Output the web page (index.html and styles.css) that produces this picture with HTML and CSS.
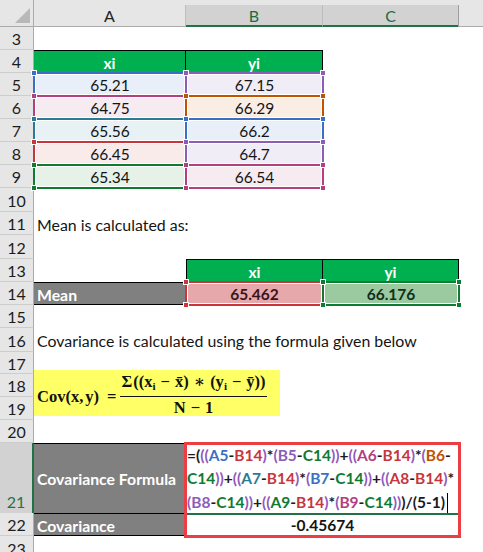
FILE: index.html
```html
<!DOCTYPE html>
<html>
<head>
<meta charset="utf-8">
<link rel="stylesheet" href="styles.css">
</head>
<body>
<div class="sheet">
  <div class="colhdr">
    <div class="corner"><span class="tri"></span></div>
    <div class="ch">A</div>
    <div class="ch sel">B</div>
    <div class="ch sel">C</div>
    <div class="ch rest"></div>
  </div>

  <div class="row h23"><div class="rh">3</div></div>
  <div class="row h23"><div class="rh">4</div><div class="c hd">xi</div><div class="c hd">yi</div></div>
  <div class="row h23"><div class="rh">5</div><div class="c ref blue">65.21</div><div class="c ref purple">67.15</div></div>
  <div class="row h23"><div class="rh">6</div><div class="c ref magenta">64.75</div><div class="c ref orange">66.29</div></div>
  <div class="row h23"><div class="rh">7</div><div class="c ref teal">65.56</div><div class="c ref blue">66.2</div></div>
  <div class="row h23"><div class="rh">8</div><div class="c ref red">66.45</div><div class="c ref purple">64.7</div></div>
  <div class="row h23"><div class="rh">9</div><div class="c ref green">65.34</div><div class="c ref magenta">66.54</div></div>
  <div class="row h24"><div class="rh">10</div></div>
  <div class="row h23"><div class="rh">11</div><div class="c txt">Mean is calculated as:</div></div>
  <div class="row h24"><div class="rh">12</div></div>
  <div class="row h23"><div class="rh">13</div><div class="c"></div><div class="c hd hdl">xi</div><div class="c hd">yi</div></div>
  <div class="row h23"><div class="rh">14</div><div class="c gray grayb">Mean</div><div class="c ref red meanx b">65.462</div><div class="c ref green meany b">66.176</div></div>
  <div class="row h23"><div class="rh">15</div></div>
  <div class="row h24"><div class="rh">16</div><div class="c txt">Covariance is calculated using the formula given below</div></div>
  <div class="row h22"><div class="rh">17</div></div>
  <div class="row h23"><div class="rh">18</div>
    <div class="c eqhost">
      <div class="eq">
        <span class="lhs">Cov(x,<span class="th"></span>y)</span><span class="eqs">=</span>
        <span class="frac">
          <span class="num"><span class="sig">Σ</span>((x<sub>i</sub><span class="op">−</span>x̄)<span class="op">∗</span>(y<sub>i</sub><span class="op">−</span>ȳ))</span>
          <span class="den">N<span class="op">−</span>1</span>
        </span>
      </div>
    </div>
  </div>
  <div class="row h23"><div class="rh">19</div></div>
  <div class="row h23"><div class="rh">20</div></div>
  <div class="row h70"><div class="rh rsel">21</div>
    <div class="c gray grayb">Covariance Formula</div>
    <div class="c span2 fcell">
      <div class="ftext">
        <span class="k">=(</span><span class="p">((</span><span class="cb">A5</span>-<span class="cr">B14</span><span class="p">)</span>*<span class="p">(</span><span class="cp">B5</span>-<span class="cg">C14</span><span class="p">))</span>+<span class="p">((</span><span class="cm">A6</span>-<span class="cr">B14</span><span class="p">)</span>*<span class="p">(</span><span class="co">B6</span>-<br>
        <span class="cg">C14</span><span class="p">))</span>+<span class="p">((</span><span class="ct">A7</span>-<span class="cr">B14</span><span class="p">)</span>*<span class="p">(</span><span class="cb">B7</span>-<span class="cg">C14</span><span class="p">))</span>+<span class="p">((</span><span class="cr">A8</span>-<span class="cr">B14</span><span class="p">)</span>*<br>
        <span class="p">(</span><span class="cp">B8</span>-<span class="cg">C14</span><span class="p">))</span>+<span class="p">((</span><span class="cg">A9</span>-<span class="cr">B14</span><span class="p">)</span>*<span class="p">(</span><span class="cm">B9</span>-<span class="cg">C14</span><span class="p">))</span>)/(5-1)<span class="caret"></span>
      </div>
      <div class="active"></div>
      <div class="redbox"></div>
    </div>
  </div>
  <div class="row h23"><div class="rh">22</div><div class="c gray grayb">Covariance</div><div class="c span2 b">-0.45674</div></div>
  <div class="row h24"><div class="rh">23</div></div>
</div>
</body>
</html>
```

FILE: styles.css
```css
* { box-sizing: border-box; margin: 0; padding: 0; }

body {
  margin: 0;
  width: 483px;
  height: 552px;
  overflow: hidden;
  background: #fff;
  font-family: Lato, "Liberation Sans", sans-serif;
  font-size: 15.5px;
  color: #141414;
}

.sheet { position: relative; }

/* column header */
.colhdr {
  display: grid;
  grid-template-columns: 34px 152px 137px 136px 24px;
  height: 27px;
  background: #e6e6e6;
}
.corner {
  position: relative;
  border-right: 1px solid #ababab;
  border-bottom: 1px solid #ababab;
}
.tri {
  position: absolute;
  right: 3px;
  bottom: 3px;
  width: 0;
  height: 0;
  border-left: 15px solid transparent;
  border-bottom: 15px solid #b8b8b8;
}
.ch {
  margin-top: 5px;
  display: flex;
  align-items: center;
  justify-content: center;
  font-size: 16px;
  color: #222;
  border-right: 1px solid #bdbdbd;
  border-bottom: 1px solid #ababab;
}
.ch.sel {
  background: #d2d2d2;
  color: #1d6b40;
  border-bottom: 2px solid #217346;
  padding-top: 1px;
}
.ch.rest { border-right: 0; border-left: 1px solid #9e9e9e; margin-left: -1px; }

/* rows */
.row {
  display: grid;
  grid-template-columns: 34px 152px 137px 136px 24px;
}
.h22 { height: 22px; }
.h23 { height: 23px; }
.h24 { height: 24px; }
.h70 { height: 70px; }

.rh {
  background: #e6e6e6;
  border-right: 1px solid #ababab;
  border-bottom: 1px solid #cdcdcd;
  display: flex;
  align-items: center;
  justify-content: center;
  font-size: 16px;
  color: #1c1c1c;
  padding-top: 1px;
}
.rh.rsel {
  background: #d2d2d2;
  color: #217346;
  border-right: 2px solid #217346;
  align-items: flex-end;
  padding-bottom: 2px;
}

.c {
  display: flex;
  align-items: center;
  justify-content: center;
  white-space: nowrap;
  padding-top: 1px;
}
.b { font-weight: bold; }
.span2 { grid-column: span 2; }

.txt {
  justify-content: flex-start;
  padding-left: 3px;
  overflow: visible;
  font-size: 15.9px;
}

.hd {
  background: #00b050;
  color: #fff;
  font-weight: bold;
  border-top: 1px solid #000;
  border-right: 1px solid #000;
}
.hdl { border-left: 1px solid #000; }

.gray {
  background: #808080;
  color: #fff;
  font-weight: bold;
  justify-content: flex-start;
  padding-left: 3px;
  font-size: 15.8px;
}
.grayb { border-top: 1px solid #000; border-bottom: 1px solid #000; }

/* formula reference highlights */
.ref {
  position: relative;
  background: var(--f);
}
.ref::before {
  content: "";
  position: absolute;
  inset: -1px;
  border: 2px solid var(--c);
  box-shadow: inset 0 0 0 1px #fff;
}
.ref::after {
  content: "";
  position: absolute;
  inset: -3px;
  background:
    linear-gradient(var(--c), var(--c)) left 1px top 1px / 4px 4px no-repeat,
    linear-gradient(var(--c), var(--c)) right 1px top 1px / 4px 4px no-repeat,
    linear-gradient(var(--c), var(--c)) left 1px bottom 1px / 4px 4px no-repeat,
    linear-gradient(var(--c), var(--c)) right 1px bottom 1px / 4px 4px no-repeat,
    linear-gradient(#fff, #fff) left top / 6px 6px no-repeat,
    linear-gradient(#fff, #fff) right top / 6px 6px no-repeat,
    linear-gradient(#fff, #fff) left bottom / 6px 6px no-repeat,
    linear-gradient(#fff, #fff) right bottom / 6px 6px no-repeat;
}
.blue    { --c: #3b6fc5; --f: #e8eff9; }
.purple  { --c: #8b5db9; --f: #f1edf7; }
.magenta { --c: #b2407f; --f: #f6ebf1; }
.orange  { --c: #bf5300; --f: #f9ede4; }
.teal    { --c: #2b7b95; --f: #e8f1f4; }
.red     { --c: #c8363d; --f: #faebeb; }
.green   { --c: #0f7b30; --f: #e6f2e8; }
.meanx   { --f: #e7a8ac; color: #3a1518; }
.meany   { --f: #9bc9a0; color: #10301a; }

/* equation picture */
.eqhost { position: relative; }
.eq {
  position: absolute;
  left: 0;
  top: -4px;
  width: 246px;
  height: 46px;
  background: #ffff66;
  display: flex;
  align-items: flex-start;
  padding-left: 3px;
  font-family: "Liberation Serif", "DejaVu Serif", serif;
  font-weight: bold;
  font-size: 16.5px;
  line-height: 16px;
  color: #111;
}
.lhs { margin-top: 19px; }
.th { display: inline-block; width: 2px; }
.eqs { margin: 19px 4px 0 8px; }
.frac {
  display: inline-flex;
  flex-direction: column;
  align-items: center;
  margin-top: 4px;
}
.num {
  border-bottom: 1px solid #111;
  padding: 0 1px 6px;
}
.den { padding-top: 3px; }
.sig { margin-right: 1px; }
.op { margin: 0 5px; }
.eq sub { font-size: 11px; vertical-align: -3px; line-height: 0; }

/* formula cell */
.fcell {
  position: relative;
  justify-content: flex-start;
  align-items: flex-start;
  border-top: 1px solid #000;
  padding: 0 0 0 1px;
}
.ftext {
  font-weight: bold;
  font-size: 15.5px;
  line-height: 23.3px;
  color: #1a1a1a;
}
.k { color: #1a1a1a; }
.p  { color: #9059bd; }
.cb { color: #3b6fc5; }
.cr { color: #c8363d; }
.cp { color: #8b5db9; }
.cg { color: #0f7b30; }
.cm { color: #b2407f; }
.co { color: #bf5300; }
.ct { color: #2b7b95; }
.caret {
  display: inline-block;
  width: 1px;
  height: 20px;
  background: #000;
  vertical-align: -5px;
  margin-left: 2px;
}
.active {
  position: absolute;
  left: 0;
  right: 1px;
  bottom: -1px;
  height: 2px;
  background: #217346;
}
.redbox {
  position: absolute;
  left: -2px;
  top: -2px;
  width: 277px;
  height: 96px;
  border: 3px solid #ea3d44;
}
```
